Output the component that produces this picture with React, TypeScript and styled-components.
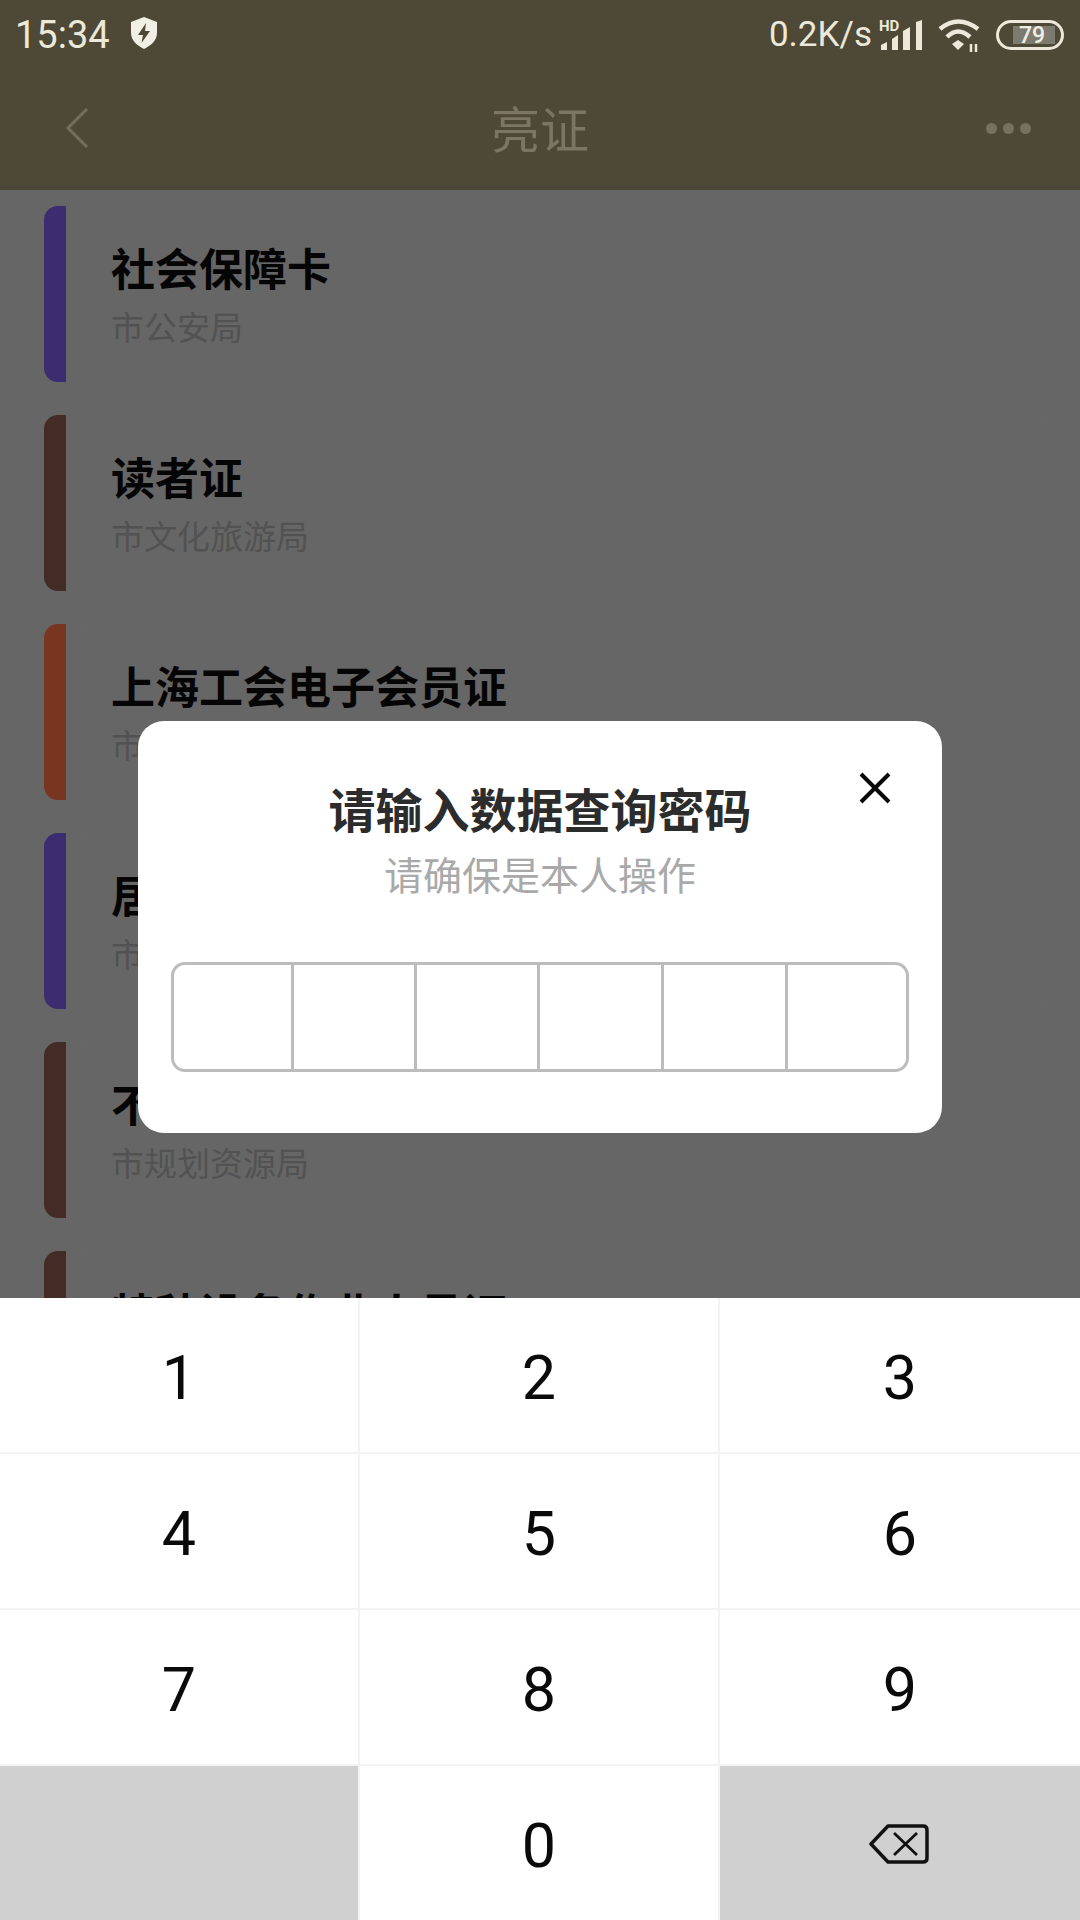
import React from "react";
import styled, { createGlobalStyle } from "styled-components";

const Global = createGlobalStyle`
  html, body { margin: 0; padding: 0; background: #666; }
  * { box-sizing: border-box; }
`;

const CJK = `"Noto Sans CJK SC", "Noto Sans", sans-serif`;

const Page = styled.div`
  position: relative;
  width: 1080px;
  height: 1920px;
  display: flex;
  flex-direction: column;
  overflow: hidden;
  background: #666666;
  font-family: ${CJK};
`;

const Header = styled.header`
  height: 190px;
  flex: none;
  background: #4e4836;
  border-bottom: 4px solid #4a4535;
  display: flex;
  flex-direction: column;
`;

const StatusBar = styled.div`
  height: 66px;
  padding: 3px 16px 0;
  display: flex;
  align-items: center;
  color: #ece8da;
  font-family: Roboto, sans-serif;
`;

const Clock = styled.span`
  font-size: 38px;
  font-weight: 400;
  margin-left: -1px;
`;

const ShieldIcon = styled.svg`
  width: 28px;
  height: 32px;
  margin: -4px 0 0 20px;
`;

const StatusRight = styled.div`
  margin-left: auto;
  display: flex;
  align-items: center;
`;

const Speed = styled.span`
  font-size: 35px;
  font-weight: 400;
  margin-right: 7px;
`;

const StatusGlyph = styled.svg<{ $gap?: number }>`
  flex: none;
  overflow: visible;
  margin-left: ${(p) => p.$gap ?? 0}px;
`;

const NavBar = styled.div`
  flex: 1;
  display: grid;
  grid-template-columns: 1fr auto 1fr;
  align-items: center;
  padding: 2px 49px 0;
`;

const BackIcon = styled.svg`
  margin: 2px 0 0 16px;
`;

const NavTitle = styled.h1`
  margin: 0;
  font-size: 49px;
  font-weight: 400;
  line-height: 60px;
  color: #7b7566;
`;

const Dots = styled.div`
  display: flex;
  gap: 6px;
  margin-top: 3px;
  justify-self: end;
`;

const Dot = styled.span`
  width: 11px;
  height: 11px;
  border-radius: 50%;
  background: #77725f;
`;

const List = styled.main`
  flex: 1;
  min-height: 0;
  overflow: hidden;
  padding: 16px 35px 0 44px;
  display: flex;
  flex-direction: column;
  gap: 33px;
`;

const Card = styled.article`
  flex: none;
  height: 176px;
  display: flex;
`;

const Bar = styled.div<{ $color: string }>`
  width: 22px;
  border-radius: 14px 0 0 14px;
  background: ${(p) => p.$color};
`;

const CardBody = styled.div`
  flex: 1;
  margin-left: 12px;
  padding: 30px 0 0 32px;
  border: 1px solid rgba(255, 255, 255, 0.012);
  border-radius: 8px;
`;

const CardTitle = styled.h2`
  margin: 0;
  font-size: 44px;
  font-weight: 700;
  line-height: 60px;
  color: #050505;
`;

const CardSub = styled.p`
  margin: 9px 0 0;
  font-size: 33px;
  font-weight: 400;
  line-height: 40px;
  color: #525252;
`;

const Modal = styled.section`
  position: absolute;
  left: 138px;
  top: 721px;
  width: 804px;
  height: 412px;
  padding: 56px 33px 0;
  background: #ffffff;
  border-radius: 26px;
  text-align: center;
`;

const CloseIcon = styled.svg`
  position: absolute;
  top: 50px;
  right: 50px;
  width: 34px;
  height: 34px;
`;

const ModalTitle = styled.h2`
  margin: 0;
  font-size: 47px;
  font-weight: 700;
  line-height: 62px;
  color: #2c2c2c;
`;

const ModalSub = styled.p`
  margin: 9px 0 0;
  font-size: 39px;
  font-weight: 400;
  line-height: 50px;
  color: #a9a9a9;
`;

const CodeBox = styled.div`
  margin-top: 64px;
  height: 110px;
  display: grid;
  grid-template-columns: 120px 123px 123px 124px 124px 1fr;
  border: 3px solid #bcbcbc;
  border-radius: 14px;
`;

const CodeCell = styled.div`
  border-right: 3px solid #bcbcbc;
  &:last-child {
    border-right: none;
  }
`;

const Keyboard = styled.div`
  flex: none;
  height: 622px;
  display: grid;
  grid-template-columns: 360px 360px 360px;
  grid-template-rows: 156px 156px 156px 154px;
  background: #ffffff;
`;

const Key = styled.div<{ $muted?: boolean }>`
  display: flex;
  align-items: center;
  justify-content: center;
  padding-top: 5px;
  font-family: Roboto, sans-serif;
  font-size: 61px;
  font-weight: 400;
  color: #0a0a0a;
  background: ${(p) => (p.$muted ? "#d0d0d0" : "#ffffff")};
  border-right: 2px solid #f3f3f3;
  border-bottom: 2px solid #f3f3f3;
  &:nth-child(3n) {
    border-right: none;
  }
  &:nth-last-child(-n + 3) {
    border-bottom: none;
  }
`;

const BackspaceIcon = styled.svg`
  margin: -4px 0 0 -3px;
`;

const cards = [
  { color: "#3b2d70", title: "社会保障卡", sub: "市公安局" },
  { color: "#432c26", title: "读者证", sub: "市文化旅游局" },
  { color: "#79351f", title: "上海工会电子会员证", sub: "市总工会" },
  { color: "#3b2d70", title: "居住证", sub: "市公安局" },
  { color: "#432c26", title: "不动产权证", sub: "市规划资源局" },
  { color: "#432c26", title: "特种设备作业人员证" },
];

const digits = ["1", "2", "3", "4", "5", "6", "7", "8", "9"];

export default function App() {
  return (
    <Page>
      <Global />
      <Header>
        <StatusBar>
          <Clock>15:34</Clock>
          <ShieldIcon viewBox="0 0 28 32">
            <path d="M14 0 L27 5 V16 C27 24 20 29 14 32 C8 29 1 24 1 16 V5 Z" fill="#f2efe4" />
            <path d="M16 6 L8 18 H13 L11.5 26 L20 14 H15 Z" fill="#4e4836" />
          </ShieldIcon>
          <StatusRight>
            <Speed>0.2K/s</Speed>
            <StatusGlyph width="46" height="32" viewBox="0 0 46 32">
              <text x="0" y="12" fontFamily="Roboto, sans-serif" fontSize="15" fontWeight="700" fill="#ece8da">HD</text>
              <path d="M2 31 V26 L8 23 V31 Z" fill="#ece8da" />
              <path d="M13 31 V20 L19 16 V31 Z" fill="#ece8da" />
              <path d="M24 31 V12 L31 8 V31 Z" fill="#ece8da" />
              <path d="M37 31 V3 L43 1 V31 Z" fill="#ece8da" />
            </StatusGlyph>
            <StatusGlyph $gap={13} width="44" height="34" viewBox="0 0 44 34">
              <g fill="none" stroke="#ece8da" strokeWidth="4.5">
                <path d="M2 11 Q20 -4 40 11" />
                <path d="M9 19 Q20 8 32 19" />
              </g>
              <path d="M20 22 L26 26 L20 32 L14 26 Z" fill="#ece8da" />
              <path d="M33 26 V34 M38 26 V34" stroke="#ece8da" strokeWidth="2.5" />
            </StatusGlyph>
            <StatusGlyph $gap={14} width="68" height="30" viewBox="0 0 68 30">
              <rect x="1.5" y="1.5" width="65" height="27" rx="13.5" fill="none" stroke="#ece8da" strokeWidth="3" />
              <rect x="17" y="6" width="42" height="18" fill="#7d7a70" />
              <text x="36" y="23" textAnchor="middle" fontFamily="Roboto, sans-serif" fontSize="23" fontWeight="500" fill="#f1eee3">79</text>
            </StatusGlyph>
          </StatusRight>
        </StatusBar>
        <NavBar>
          <BackIcon width="24" height="42" viewBox="0 0 24 42">
            <path d="M22 2 L3 21 L22 40" fill="none" stroke="#716c5b" strokeWidth="3" />
          </BackIcon>
          <NavTitle>亮证</NavTitle>
          <Dots>
            <Dot />
            <Dot />
            <Dot />
          </Dots>
        </NavBar>
      </Header>

      <List>
        {cards.map((c) => (
          <Card key={c.title}>
            <Bar $color={c.color} />
            <CardBody>
              <CardTitle>{c.title}</CardTitle>
              {c.sub && <CardSub>{c.sub}</CardSub>}
            </CardBody>
          </Card>
        ))}
      </List>

      <Keyboard>
        {digits.map((d) => (
          <Key key={d}>{d}</Key>
        ))}
        <Key $muted />
        <Key>0</Key>
        <Key $muted>
          <BackspaceIcon width="60" height="40" viewBox="0 0 60 40">
            <path d="M19 2 H54 Q58 2 58 6 V34 Q58 38 54 38 H19 L2 20 Z" fill="none" stroke="#111" strokeWidth="3.5" strokeLinejoin="round" />
            <path d="M25 9 L48 31 M48 9 L25 31" fill="none" stroke="#111" strokeWidth="2.8" />
          </BackspaceIcon>
        </Key>
      </Keyboard>

      <Modal>
        <CloseIcon viewBox="0 0 34 34">
          <path d="M3 3 L31 31 M31 3 L3 31" fill="none" stroke="#0a0a0a" strokeWidth="4" />
        </CloseIcon>
        <ModalTitle>请输入数据查询密码</ModalTitle>
        <ModalSub>请确保是本人操作</ModalSub>
        <CodeBox>
          {[0, 1, 2, 3, 4, 5].map((i) => (
            <CodeCell key={i} />
          ))}
        </CodeBox>
      </Modal>
    </Page>
  );
}
